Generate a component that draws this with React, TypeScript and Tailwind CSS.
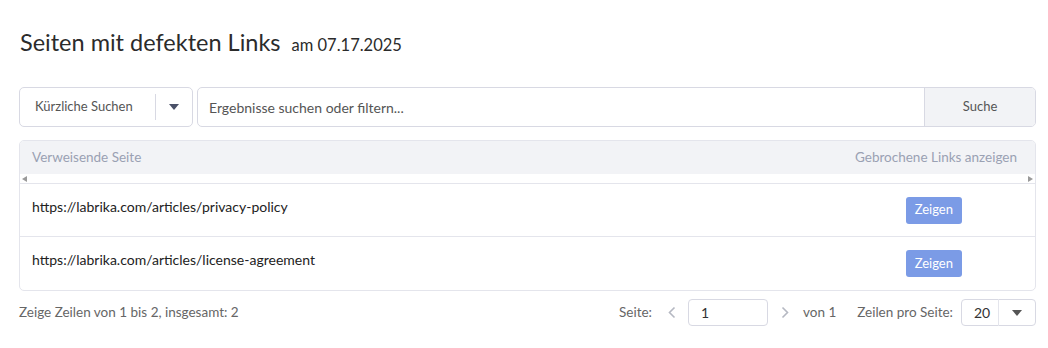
import React from "react";

const rows = [
	"https://labrika.com/articles/privacy-policy",
	"https://labrika.com/articles/license-agreement",
];

const Caret: React.FC<{ className?: string }> = ({ className }) => (
	<svg width="10" height="6" viewBox="0 0 10 6" className={className}>
		<path d="M0 0h10L5 6z" fill="currentColor" />
	</svg>
);

const Chevron: React.FC<{ dir: "left" | "right" }> = ({ dir }) => (
	<svg width="8" height="13" viewBox="0 0 8 13" className="text-[#b5b8c2]">
		<path
			d={dir === "left" ? "M6.5 1.5L1.5 6.5l5 5" : "M1.5 1.5l5 5-5 5"}
			fill="none"
			stroke="currentColor"
			strokeWidth="1.6"
		/>
	</svg>
);

export default function App() {
	return (
		<div className="w-[1048px] h-[348px] bg-white pl-[19px] pr-[12px] pt-[27px] font-['Lato',sans-serif] text-[#333]">
			<div className="flex items-baseline gap-[11px] pl-px">
				<h1 className="text-[23.5px] leading-[31px] text-[#2b2b2b]">Seiten mit defekten Links</h1>
				<span className="text-[16.5px] text-[#2b2b2b]">am 07.17.2025</span>
			</div>

			<div className="mt-[29px] flex h-10 gap-[4px]">
				<div className="flex w-[174px] items-center rounded-[5px] border border-[#d8d9e3]">
					<span className="flex-1 pl-[15px] text-[13px] text-[#555]">Kürzliche Suchen</span>
					<div className="h-[26px] w-px bg-[#d8d9e3]" />
					<div className="flex w-[36px] justify-center">
						<Caret className="text-[#4a5168]" />
					</div>
				</div>
				<div className="flex flex-1 overflow-hidden rounded-[5px] border border-[#d8d9e3]">
					<div className="flex flex-1 items-center pl-[11px] text-[14px] text-[#555]">
						Ergebnisse suchen oder filtern...
					</div>
					<div className="flex w-[111px] items-center justify-center border-l border-[#d8d9e3] bg-[#f2f3f6] text-[13px] text-[#555]">
						Suche
					</div>
				</div>
			</div>

			<div className="mt-[13px] overflow-hidden rounded-[5px] border border-[#e4e5ec]">
				<div className="flex h-[33px] items-center justify-between bg-[#f2f3f6] px-[12px] text-[13.5px] text-[#9aa1b3]">
					<span>Verweisende Seite</span>
					<span className="pr-[6px]">Gebrochene Links anzeigen</span>
				</div>
				<div className="flex h-[10px] items-center justify-between border-b border-[#e4e5ec] px-[2px]">
					<svg width="5" height="6" viewBox="0 0 5 6">
						<path d="M5 0v6L0 3z" fill="#9a9a9a" />
					</svg>
					<svg width="5" height="6" viewBox="0 0 5 6">
						<path d="M0 0v6l5-3z" fill="#9a9a9a" />
					</svg>
				</div>
				{rows.map((url, i) => (
					<div
						key={url}
						className={`flex h-[53px] items-center justify-between pl-[12px] pr-[73px] ${i === 0 ? "border-b border-[#e4e5ec]" : ""}`}
					>
						<span className="-mt-[8px] text-[14px] text-[#222]">{url}</span>
						<button className="h-[27px] rounded-[3px] bg-[#7b9be6] px-[9px] text-[13px] text-white">
							Zeigen
						</button>
					</div>
				))}
			</div>

			<div className="mt-[8px] flex items-center justify-between text-[13.5px] text-[#666]">
				<span>Zeige Zeilen von 1 bis 2, insgesamt: 2</span>
				<div className="flex items-center">
					<span>Seite:</span>
					<span className="ml-[16px]"><Chevron dir="left" /></span>
					<div className="ml-[12px] flex h-[27px] w-[80px] items-center rounded-[4px] border border-[#d8d9e3] pl-[12px] text-[14px] text-[#333]">
						1
					</div>
					<span className="ml-[13px]"><Chevron dir="right" /></span>
					<span className="ml-[14px]">von 1</span>
					<span className="ml-[21px]">Zeilen pro Seite:</span>
					<div className="ml-[8px] flex h-[27px] w-[75px] items-center rounded-[4px] border border-[#d8d9e3]">
						<span className="w-[36px] pl-[12px] text-[14px] text-[#333]">20</span>
						<div className="h-[27px] w-px bg-[#e4e5ec]" />
						<div className="flex flex-1 justify-center">
							<Caret className="text-[#555]" />
						</div>
					</div>
				</div>
			</div>
		</div>
	);
}
